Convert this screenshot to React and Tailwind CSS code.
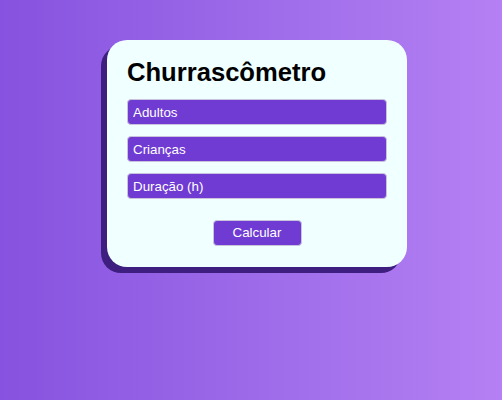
export default function App() {
  const fields = ['Adultos', 'Crianças', 'Duração (h)']

  return (
    <div className="min-h-screen bg-linear-to-r from-[#8652df] to-[#b580f3] flex justify-center items-start pt-[40px] pl-[12px] font-['Liberation_Sans',Arial,sans-serif]">
      <div className="w-[300px] bg-[#f0ffff] rounded-[20px] shadow-[-6px_6px_0_#3e1e7e] px-[20px] pt-[18px] pb-[21px] flex flex-col">
        <h1 className="text-[25.6px] leading-[29px] font-bold text-black mb-[12px]">Churrascômetro</h1>
        <div className="flex flex-col gap-[11px]">
          {fields.map(f => (
            <input key={f} placeholder={f}
              className="h-[26px] w-full bg-[#6f3bd3] border border-[#c9c4dc] rounded-[4px] px-[5px] text-[13.33px] text-white placeholder:text-white outline-none" />
          ))}
        </div>
        <div className="flex justify-center mt-[21px]">
          <button className="w-[89px] h-[26px] bg-[#6f3bd3] border border-[#c9c4dc] rounded-[4px] text-[13.33px] text-white">
            Calcular
          </button>
        </div>
      </div>
    </div>
  )
}
